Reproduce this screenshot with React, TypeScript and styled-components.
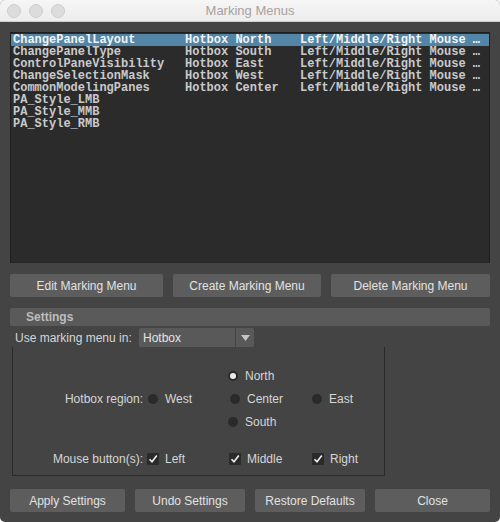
import React from "react";
import styled, { createGlobalStyle } from "styled-components";

const GlobalStyle = createGlobalStyle`
    html, body {
        margin: 0;
        padding: 0;
        background: #ffffff;
    }
    body {
        font-family: "Liberation Sans", Arial, sans-serif;
    }
`;

const Window = styled.div`
    width: 500px;
    height: 522px;
    background: #444444;
    border-radius: 5px;
    overflow: hidden;
    display: flex;
    flex-direction: column;
`;

const TitleBar = styled.div`
    height: 22px;
    flex: none;
    box-sizing: border-box;
    background: linear-gradient(#f6f6f6, #ececec);
    border-bottom: 1px solid #cfcfcf;
    display: flex;
    align-items: center;
    position: relative;
    padding-left: 7px;
    gap: 7px;
`;

const Light = styled.span`
    width: 12px;
    height: 12px;
    border-radius: 50%;
    background: #dcdcdc;
    border: 1px solid #cdcdcd;
    margin-right: 1px;
`;

const Title = styled.div`
    position: absolute;
    left: 0;
    right: 0;
    text-align: center;
    font-size: 13px;
    color: #a8a1a1;
    pointer-events: none;
`;

const Body = styled.div`
    flex: 1;
    display: flex;
    flex-direction: column;
    padding: 10px 10px 0 10px;
    color: #d6d6d6;
    font-size: 12px;
`;

const ListBox = styled.div`
    height: 231px;
    box-sizing: border-box;
    background: #2b2b2b;
    border: 1px solid #1f1f1f;
    border-bottom-color: #262626;
    padding-top: 1px;
    font-family: "Liberation Mono", "Courier New", monospace;
    font-weight: bold;
    font-size: 12px;
`;

const ListRow = styled.div<{ selected?: boolean }>`
    display: flex;
    height: 12px;
    line-height: 12px;
    padding-left: 2px;
    white-space: pre;
    overflow: hidden;
    background: ${p => (p.selected ? "#5285a6" : "transparent")};
    color: ${p => (p.selected ? "#f4f4f4" : "#c9cacc")};
`;

const ListCell = styled.span<{ w?: number }>`
    flex: ${p => (p.w ? `0 0 ${p.w}px` : "1")};
`;

const ButtonRow = styled.div<{ top: number; gap: number }>`
    display: flex;
    gap: ${p => p.gap}px;
    margin-top: ${p => p.top}px;
`;

const Button = styled.div<{ w: number }>`
    width: ${p => p.w}px;
    height: 23px;
    background: #5d5d5d;
    border-radius: 2px;
    display: flex;
    align-items: center;
    justify-content: center;
    color: #e2e2e2;
    font-size: 12px;
`;

const SectionBar = styled.div`
    margin-top: 11px;
    height: 18px;
    background: #5a5a5a;
    border-radius: 2px;
    display: flex;
    align-items: center;
    padding-left: 16px;
    font-weight: bold;
    color: #bdbdbd;
`;

const ModeRow = styled.div`
    display: flex;
    align-items: center;
    margin-top: 2px;
    height: 19px;
    padding-left: 5px;
`;

const ModeLabel = styled.span`
    width: 124px;
`;

const Select = styled.div`
    display: flex;
    gap: 1px;
    height: 19px;
`;

const SelectValue = styled.div`
    width: 92px;
    background: #595959;
    border-radius: 2px 0 0 2px;
    padding-left: 4px;
    display: flex;
    align-items: center;
    color: #e4e4e4;
`;

const SelectArrow = styled.div`
    width: 18px;
    background: #595959;
    border-radius: 0 2px 2px 0;
    display: flex;
    align-items: center;
    justify-content: center;
`;

const Frame = styled.div`
    width: 373px;
    margin-left: 2px;
    box-sizing: border-box;
    border: 1px solid #2a2a2a;
    border-top: none;
    padding: 17px 0 5px 0;
    display: grid;
    grid-template-columns: 131px 82px 82px 1fr;
    grid-template-rows: 23px 23px 23px 14px 23px;
`;

const FieldLabel = styled.div<{ row: number }>`
    grid-column: 1;
    grid-row: ${p => p.row};
    display: flex;
    align-items: center;
    justify-content: flex-end;
    padding-right: 1px;
`;

const Cell = styled.div<{ row: number; col: number; shift?: number }>`
    grid-column: ${p => p.col};
    grid-row: ${p => p.row};
    display: flex;
    align-items: center;
    gap: 7px;
    padding-left: ${p => 4 + (p.shift || 0)}px;
`;

const Radio = styled.span<{ on?: boolean }>`
    width: 10px;
    height: 10px;
    border-radius: 50%;
    background: #2a2a2a;
    display: flex;
    align-items: center;
    justify-content: center;
    &::after {
        content: "";
        display: ${p => (p.on ? "block" : "none")};
        width: 6px;
        height: 6px;
        border-radius: 50%;
        background: #ececec;
    }
`;

const Check = styled.span`
    width: 12px;
    height: 12px;
    background: #2a2a2a;
    border-radius: 1px;
    display: flex;
    align-items: center;
    justify-content: center;
    margin-right: -1px;
`;

const CheckMark = () => (
    <svg width="10" height="10" viewBox="0 0 10 10">
        <path d="M1.5 5.2 L4 7.8 L8.8 1.6" fill="none" stroke="#f0f0f0" strokeWidth="1.6" />
    </svg>
);

const rows = [
    ["ChangePanelLayout", "Hotbox North", "Left/Middle/Right Mouse …"],
    ["ChangePanelType", "Hotbox South", "Left/Middle/Right Mouse …"],
    ["ControlPaneVisibility", "Hotbox East", "Left/Middle/Right Mouse …"],
    ["ChangeSelectionMask", "Hotbox West", "Left/Middle/Right Mouse …"],
    ["CommonModelingPanes", "Hotbox Center", "Left/Middle/Right Mouse …"],
    ["PA_Style_LMB", "", ""],
    ["PA_Style_MMB", "", ""],
    ["PA_Style_RMB", "", ""]
];

const App = () => {
    return (
        <Window>
            <GlobalStyle />
            <TitleBar>
                <Light />
                <Light />
                <Light />
                <Title>Marking Menus</Title>
            </TitleBar>
            <Body>
                <ListBox>
                    {rows.map((r, i) => (
                        <ListRow key={i} selected={i === 0}>
                            <ListCell w={172}>{r[0]}</ListCell>
                            <ListCell w={115}>{r[1]}</ListCell>
                            <ListCell>{r[2]}</ListCell>
                        </ListRow>
                    ))}
                </ListBox>

                <ButtonRow top={11} gap={10}>
                    <Button w={153}>Edit Marking Menu</Button>
                    <Button w={148}>Create Marking Menu</Button>
                    <Button w={159}>Delete Marking Menu</Button>
                </ButtonRow>

                <SectionBar>Settings</SectionBar>

                <ModeRow>
                    <ModeLabel>Use marking menu in:</ModeLabel>
                    <Select>
                        <SelectValue>Hotbox</SelectValue>
                        <SelectArrow>
                            <svg width="9" height="6" viewBox="0 0 9 6">
                                <path d="M0 0 H9 L4.5 6 Z" fill="#c4c4c4" />
                            </svg>
                        </SelectArrow>
                    </Select>
                </ModeRow>

                <Frame>
                    <FieldLabel row={2}>Hotbox region:</FieldLabel>
                    <Cell row={1} col={3} shift={-2}>
                        <Radio on />
                        <span>North</span>
                    </Cell>
                    <Cell row={2} col={2}>
                        <Radio />
                        <span>West</span>
                    </Cell>
                    <Cell row={2} col={3}>
                        <Radio />
                        <span>Center</span>
                    </Cell>
                    <Cell row={2} col={4}>
                        <Radio />
                        <span>East</span>
                    </Cell>
                    <Cell row={3} col={3} shift={-2}>
                        <Radio />
                        <span>South</span>
                    </Cell>
                    <FieldLabel row={5}>Mouse button(s):</FieldLabel>
                    <Cell row={5} col={2} shift={-1}>
                        <Check>
                            <CheckMark />
                        </Check>
                        <span>Left</span>
                    </Cell>
                    <Cell row={5} col={3} shift={-1}>
                        <Check>
                            <CheckMark />
                        </Check>
                        <span>Middle</span>
                    </Cell>
                    <Cell row={5} col={4}>
                        <Check>
                            <CheckMark />
                        </Check>
                        <span>Right</span>
                    </Cell>
                </Frame>

                <ButtonRow top={13} gap={10}>
                    <Button w={115}>Apply Settings</Button>
                    <Button w={110}>Undo Settings</Button>
                    <Button w={110}>Restore Defaults</Button>
                    <Button w={115}>Close</Button>
                </ButtonRow>
            </Body>
        </Window>
    );
};

export default App;
